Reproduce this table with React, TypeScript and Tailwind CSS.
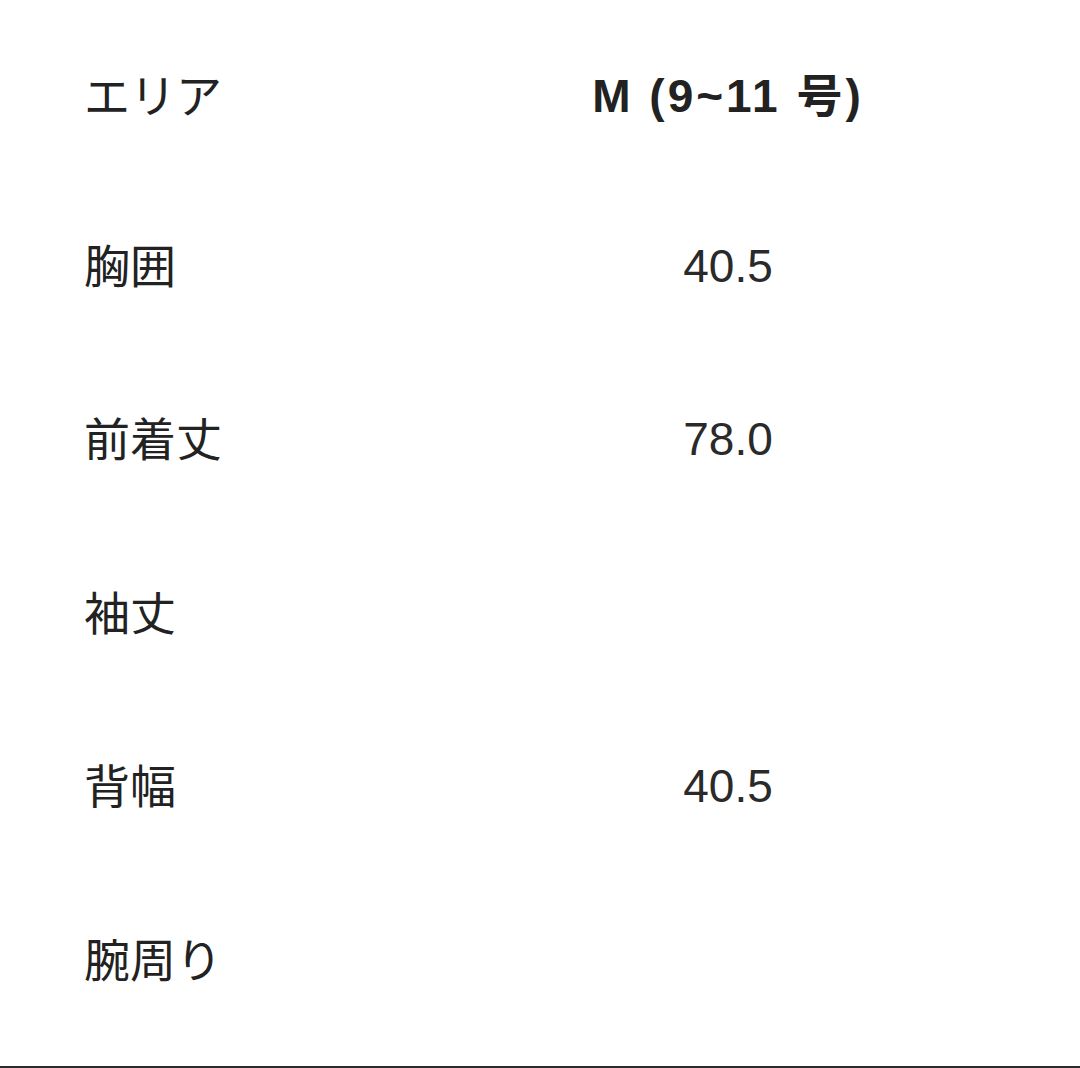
const rows: { label: string; value: string }[] = [
  { label: "胸囲", value: "40.5" },
  { label: "前着丈", value: "78.0" },
  { label: "袖丈", value: "" },
  { label: "背幅", value: "40.5" },
  { label: "腕周り", value: "" },
];

const jp = "font-['Noto_Sans_CJK_JP',sans-serif]";
const num = "font-['Liberation_Sans','Noto_Sans_CJK_JP',sans-serif]";

export default function App() {
  return (
    <div className="flex h-[1068px] w-[1080px] flex-col bg-white text-[#222]">
      <div className="pt-[12px]">
        <div className="grid h-[168px] grid-cols-[292px_1fr] items-center pl-[84px]">
          <div className={`${jp} mb-[6px] text-[46px] leading-none`}>エリア</div>
          <div className={`${num} text-center text-[46px] font-bold leading-none tracking-[0.065em]`}>
            M (9~11 号)
          </div>
        </div>
        {rows.map((r) => (
          <div
            key={r.label}
            className="grid h-[173.5px] grid-cols-[292px_1fr] items-center pl-[84px]"
          >
            <div className={`${jp} mb-[8px] text-[46px] leading-none`}>{r.label}</div>
            <div className={`${num} mb-[2px] text-center text-[46px] leading-none text-[#2a2a2a]`}>
              {r.value}
            </div>
          </div>
        ))}
      </div>
      <div className="mt-auto h-[2px] w-full bg-[#2b2b2b]" />
    </div>
  );
}
